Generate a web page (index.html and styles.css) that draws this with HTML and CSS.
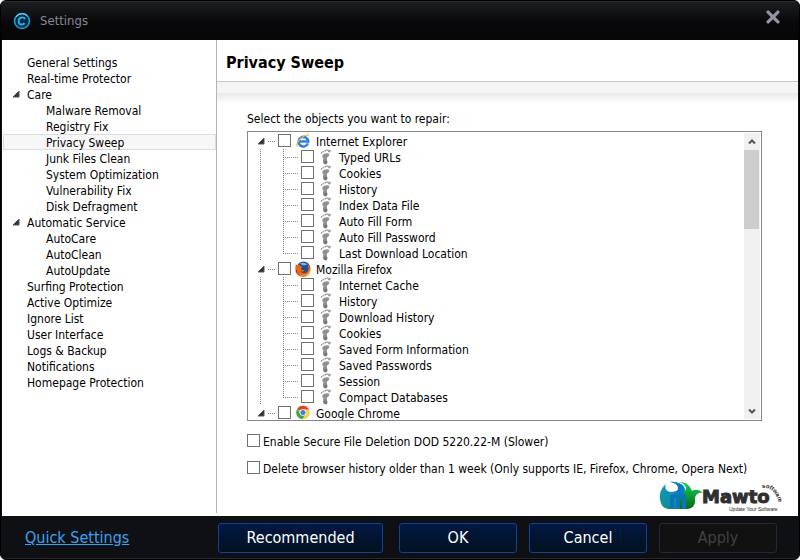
FILE: index.html
```html
<!DOCTYPE html>
<html lang="en">
<head>
<meta charset="utf-8">
<title>Settings</title>
<link rel="stylesheet" href="styles.css">
</head>
<body>
<svg class="defs" aria-hidden="true">
  <symbol id="foot" viewBox="0 0 12 16">
    <path d="M2.400 6.300C3.600 4.300 7.600 3.700 9 5c1 1.100-.3 2.300-1.400 3.100-1 .9-.8 2.200-.5 3.700.4 1.800.2 3.500-1.500 3.500-1.800 0-2.400-1.400-2.400-3.200 0-1.500.3-2.300-.3-3.300-.6-.9-.9-1.600-.5-2.500z" fill="#929292"/>
    <path d="M3.300 11.500c-.2 2.300.5 3.800 2.300 3.800s1.900-1.800 1.500-3.500z" fill="#787878"/>
    <g fill="#a2a2a2"><circle cx="1.600" cy="3.900" r=".9"/><circle cx="3.400" cy="2.600" r=".9"/><circle cx="5.300" cy="1.700" r=".9"/><circle cx="7.100" cy="1.200" r=".9"/><circle cx="9.300" cy="2" r="1.500"/></g>
  </symbol>
  <symbol id="twisty" viewBox="0 0 8 8"><path d="M7 1v6H1z" fill="#333" stroke="#555" stroke-width="1"/></symbol>
</svg>
<div class="window">
  <header class="titlebar">
    <svg class="app-icon" viewBox="0 0 18 18" aria-hidden="true">
      <circle cx="9" cy="9" r="7.500" fill="#042b42" stroke="#1b9fdc" stroke-width="1.600"/>
      <path d="M3 5a7.500 7.500 0 0 1 11-1.500" fill="none" stroke="#7fe0ff" stroke-width="1"/>
      <path d="M12 7.300C11.600 5.800 10.500 5.300 9.300 5.400 7 5.600 5.600 7.600 5.700 9.800c.1 1.900 1.500 2.900 3.200 2.700 1.200-.1 2-.6 2.600-1.400" fill="none" stroke="#22b4f0" stroke-width="1.900"/>
    </svg>
    <h1>Settings</h1>
    <button class="close" type="button" aria-label="Close"><svg viewBox="0 0 12 12"><path d="M1.800 1.800l8.400 8.400M10.200 1.800l-8.400 8.400" stroke="#9294a4" stroke-width="2.800" stroke-linecap="round"/></svg></button>
  </header>
  <div class="content">
    <nav class="sidebar">
      <ul>
        <li><a href="#">General Settings</a></li>
        <li><a href="#">Real-time Protector</a></li>
        <li class="group"><a href="#"><svg class="twisty"><use href="#twisty"/></svg>Care</a>
          <ul>
            <li><a href="#">Malware Removal</a></li>
            <li><a href="#">Registry Fix</a></li>
            <li><a href="#" class="current">Privacy Sweep</a></li>
            <li><a href="#">Junk Files Clean</a></li>
            <li><a href="#">System Optimization</a></li>
            <li><a href="#">Vulnerability Fix</a></li>
            <li><a href="#">Disk Defragment</a></li>
          </ul>
        </li>
        <li class="group"><a href="#"><svg class="twisty"><use href="#twisty"/></svg>Automatic Service</a>
          <ul>
            <li><a href="#">AutoCare</a></li>
            <li><a href="#">AutoClean</a></li>
            <li><a href="#">AutoUpdate</a></li>
          </ul>
        </li>
        <li><a href="#">Surfing Protection</a></li>
        <li><a href="#">Active Optimize</a></li>
        <li><a href="#">Ignore List</a></li>
        <li><a href="#">User Interface</a></li>
        <li><a href="#">Logs &amp; Backup</a></li>
        <li><a href="#">Notifications</a></li>
        <li><a href="#">Homepage Protection</a></li>
      </ul>
    </nav>
    <main>
      <h2>Privacy Sweep</h2>
      <div class="panel">
        <p class="prompt">Select the objects you want to repair:</p>
        <div class="listbox">
          <ul class="tree">
            <li>
              <label class="root"><svg class="twisty"><use href="#twisty"/></svg><span class="stub"></span><input type="checkbox"><svg class="brand" viewBox="0 0 16 16"><path d="M12.900 10.400A4.800 4.800 0 1 1 13.200 8.400H5" fill="none" stroke="#2f7de6" stroke-width="2.500"/><path d="M2.400 13.600C.8 12.200 3 7.200 7.500 4c3-2.100 6-2.900 6.300-1.300" fill="none" stroke="#e6bb45" stroke-width="1.200"/></svg>Internet Explorer</label>
              <ul>
                <li><label><input type="checkbox"><svg class="foot"><use href="#foot"/></svg>Typed URLs</label></li>
                <li><label><input type="checkbox"><svg class="foot"><use href="#foot"/></svg>Cookies</label></li>
                <li><label><input type="checkbox"><svg class="foot"><use href="#foot"/></svg>History</label></li>
                <li><label><input type="checkbox"><svg class="foot"><use href="#foot"/></svg>Index Data File</label></li>
                <li><label><input type="checkbox"><svg class="foot"><use href="#foot"/></svg>Auto Fill Form</label></li>
                <li><label><input type="checkbox"><svg class="foot"><use href="#foot"/></svg>Auto Fill Password</label></li>
                <li><label><input type="checkbox"><svg class="foot"><use href="#foot"/></svg>Last Download Location</label></li>
              </ul>
            </li>
            <li>
              <label class="root"><svg class="twisty"><use href="#twisty"/></svg><span class="stub"></span><input type="checkbox"><svg class="brand" viewBox="0 0 16 16"><circle cx="8.500" cy="7.300" r="6.800" fill="#234f8c"/><path d="M5 2.500c3-1.600 6-.8 7.400 1.200-1.500 0-2.200.7-3.600.6C7 4.200 6.300 3.700 5 2.500z" fill="#79b5e4"/><path d="M1 3.200C1.600 3.600 2 4 2.500 4.200 4 3.700 5 4.300 5.600 5.200l1.800.2c0 1-1.500 1.300-1.400 2.300.3 1.700 2.200 1.500 3.600 1.200-1.200 2-3.300 2.100-4.500 1.200 1.500 2.900 6.500 3 8-.5.800-2 .3-4.600-.9-6.300 2.300 1.500 3.500 3.600 3.300 6-.3 4.200-3.500 6.700-7.300 6.600C3.800 15.800.6 12.700.4 9 .3 6.700.3 5 1 3.200z" fill="#ea6a16"/><path d="M14 4c1.500 2 1.600 5-.1 7.300-2 2.700-5.600 3.600-8.500 2.500 4 2.800 9.900.4 10-5C15.500 7 15 5.400 14 4z" fill="#f6b73a"/><path d="M.7 9c.3 2.700 2 5 4.700 6C3 13.500 2 11.500 2 9z" fill="#b82e12"/></svg>Mozilla Firefox</label>
              <ul>
                <li><label><input type="checkbox"><svg class="foot"><use href="#foot"/></svg>Internet Cache</label></li>
                <li><label><input type="checkbox"><svg class="foot"><use href="#foot"/></svg>History</label></li>
                <li><label><input type="checkbox"><svg class="foot"><use href="#foot"/></svg>Download History</label></li>
                <li><label><input type="checkbox"><svg class="foot"><use href="#foot"/></svg>Cookies</label></li>
                <li><label><input type="checkbox"><svg class="foot"><use href="#foot"/></svg>Saved Form Information</label></li>
                <li><label><input type="checkbox"><svg class="foot"><use href="#foot"/></svg>Saved Passwords</label></li>
                <li><label><input type="checkbox"><svg class="foot"><use href="#foot"/></svg>Session</label></li>
                <li><label><input type="checkbox"><svg class="foot"><use href="#foot"/></svg>Compact Databases</label></li>
              </ul>
            </li>
            <li>
              <label class="root"><svg class="twisty"><use href="#twisty"/></svg><span class="stub"></span><input type="checkbox"><svg class="brand" viewBox="0 0 16 16"><circle cx="8" cy="7.500" r="6.700" fill="#fbd03c"/><path d="M8 7.500L2.200 4.100A6.700 6.700 0 0 1 13.900 4.500H8z" fill="#dc4334"/><path d="M2.200 4.100A6.700 6.700 0 0 0 7.300 14.200L10.300 9 5.400 9z" fill="#3ba650"/><circle cx="8" cy="7.500" r="3.300" fill="#fff"/><circle cx="8" cy="7.500" r="2.500" fill="#3d7fd8"/></svg>Google Chrome</label>
            </li>
          </ul>
          <div class="scrollbar" aria-hidden="true">
            <svg class="arrow" viewBox="0 0 16 16"><path d="M5 10l3-3 3 3" fill="none" stroke="#555" stroke-width="2"/></svg>
            <span class="thumb"></span>
            <svg class="arrow last" viewBox="0 0 16 16"><path d="M5 7l3 3 3-3" fill="none" stroke="#555" stroke-width="2"/></svg>
          </div>
        </div>
        <label class="option"><input type="checkbox">Enable Secure File Deletion DOD 5220.22-M (Slower)</label>
        <label class="option"><input type="checkbox">Delete browser history older than 1 week (Only supports IE, Firefox, Chrome, Opera Next)</label>
        <svg class="logo" viewBox="0 0 124 30" role="img" aria-label="Mawto Software">
          <defs>
            <linearGradient id="lg1" x1="0" y1="0" x2="0" y2="1"><stop offset="0" stop-color="#1595c8"/><stop offset="1" stop-color="#0d8f8c"/></linearGradient>
            <linearGradient id="lg2" x1="0" y1="0" x2="0" y2="1"><stop offset="0" stop-color="#12d354"/><stop offset="1" stop-color="#05661b"/></linearGradient>
            <path id="arc" d="M103 6Q117 4 121 26"/>
          </defs>
          <path d="M7 2C2 6-1 13 2 21c1 4 5 6 9 6h8V14c0-3-3-4-6-4C8 10 5 7 7 2z" fill="url(#lg1)"/>
          <path d="M20 0c8 0 11 4 13 9 3-2 7-2 11 2-5-1-8 2-8 6 1 6-3 10-8 10h-8V14c2-4 7-4 7-8-1-3-3-5-7-6z" fill="url(#lg2)"/>
          <path d="M11 0c8-1 15 3 15 8-1 4-7 4-8 8-1-4-3-6-7-6 5 0 8-1 8-4 0-3-3-5-8-6z" fill="#0879c5"/>
          <path d="M11 27V14c2-2 5-3 8-1 3-2 7-2 8 1v13h-4V16c-1-1-2-1-2 0v11h-4V16c-1-1-2-1-2 0v11z" fill="#0874bc"/>
          <text class="wordmark" x="43" y="21">Mawto</text>
          <text class="tagline" x="70" y="29">Update Your Software</text>
          <text class="arcword"><textPath href="#arc">software</textPath></text>
        </svg>
      </div>
    </main>
  </div>
  <footer>
    <a class="quick" href="#">Quick Settings</a>
    <button class="wide" type="button">Recommended</button>
    <button type="button">OK</button>
    <button type="button">Cancel</button>
    <button type="button" disabled>Apply</button>
  </footer>
</div>
</body>
</html>
```
FILE: styles.css
```css
* { box-sizing: border-box; }
body {
  margin: 0;
  background: #fff;
  color: #000;
  font: 12px/18px "DejaVu Sans Condensed", "DejaVu Sans", sans-serif;
}
ul { list-style: none; margin: 0; padding: 0; }
h1, h2, p { margin: 0; font-weight: normal; }
a { color: inherit; text-decoration: none; }
.defs { display: none; }

.window {
  display: flex;
  flex-direction: column;
  height: 100vh;
  min-height: 480px;
  border: 1px solid #000;
  border-radius: 6px;
  background: #0f1013;
  overflow: hidden;
}

.titlebar {
  display: flex;
  align-items: center;
  flex: none;
  height: 39px;
  padding: 0 19px 0 12px;
  border-top: 1px solid #2c2e34;
  background: linear-gradient(#1c1d20, #08080a 55%, #060606);
}
.app-icon { width: 18px; height: 18px; margin-right: 9px; }
h1 { color: #858a99; font-size: 13px; }
.close { margin: 0 0 8px auto; padding: 0; border: 0; background: none; }
.close svg { display: block; width: 14px; height: 14px; }

.content {
  display: flex;
  flex: 1;
  min-height: 0;
  margin: 0 1px;
  background: #fff;
}

.sidebar {
  flex: none;
  width: 215px;
  margin-bottom: 3px;
  padding: 14px 0 0 1px;
  border-right: 1px solid #b5b5b8;
}
.sidebar a {
  display: block;
  height: 16px;
  padding-left: 24px;
}
.sidebar li li a { padding-left: 43px; }
.sidebar .group > a { display: flex; padding-left: 9px; }
.sidebar .twisty { margin-right: 7px; }
.sidebar .current { background: #f7f7f7; box-shadow: inset 0 0 0 1px #dcdcdc; }
.twisty { flex: none; width: 8px; height: 8px; margin-top: 4px; }

main {
  display: flex;
  flex-direction: column;
  flex: 1;
  min-width: 0;
}
h2 {
  height: 42px;
  padding-left: 9px;
  border-bottom: 1px solid #c8c8c8;
  font-size: 16px;
  font-weight: bold;
  line-height: 45px;
}
.panel {
  display: flex;
  flex-direction: column;
  flex: 1;
  min-height: 0;
  padding: 28px 36px 4px 30px;
  background: linear-gradient(#f5f5f5 11px, #e9e9e9 11px, #fff 22px);
}
.prompt { margin-bottom: 3px; }

.listbox {
  display: flex;
  flex: 1;
  min-height: 0;
  margin-bottom: 12px;
  padding: 1px;
  border: 1px solid #828790;
  overflow: hidden;
}
.tree { flex: 1; min-width: 0; }
.tree label { display: flex; align-items: flex-start; height: 16px; }
.tree .root { padding-left: 8px; }
.tree .root .twisty { margin-right: 3px; }
.stub {
  width: 7px;
  height: 1px;
  margin: 8px 3px 0 0;
  background: repeating-linear-gradient(90deg, #808080 0 1px, transparent 1px 2px);
}
.tree li ul {
  padding-left: 34px;
  background: repeating-linear-gradient(#808080 0 1px, transparent 1px 2px) 11px 0 / 1px 100% no-repeat;
}
.tree li li {
  padding-left: 18px;
  background:
    repeating-linear-gradient(#808080 0 1px, transparent 1px 2px) 0 0 / 1px 100% no-repeat,
    repeating-linear-gradient(90deg, #808080 0 1px, transparent 1px 2px) 0 8px / 15px 1px no-repeat;
}
.tree li li:last-child { background-size: 1px 8px, 15px 1px; }
.brand { width: 16px; height: 16px; margin: 0 5px 0 4px; }
.foot { width: 12px; height: 16px; margin: 0 7px 0 6px; }

input {
  appearance: none;
  flex: none;
  width: 13px;
  height: 13px;
  margin: 1px 0 0;
  border: 1px solid #707070;
  background: #fff;
}
input:checked { background: #555; box-shadow: inset 0 0 0 2px #fff; }

.scrollbar {
  display: flex;
  flex-direction: column;
  flex: none;
  width: 16px;
  background: #f0f0f0;
}
.arrow { width: 16px; height: 17px; }
.arrow.last { margin-top: auto; }
.thumb { width: 15px; height: 79px; background: #cdcdcd; }

.option {
  display: flex;
  align-items: flex-start;
  flex: none;
  gap: 3px;
  height: 16px;
  margin-bottom: 11px;
  white-space: nowrap;
}
.logo {
  flex: none;
  align-self: flex-end;
  width: 124px;
  height: 30px;
  margin: -5px -21px 0 0;
  overflow: visible;
}
.wordmark { font: 900 18px "DejaVu Sans", sans-serif; fill: #2f2f31; stroke: #2f2f31; stroke-width: 1px; }
.tagline { font: 5px "Liberation Sans", sans-serif; fill: #222; }
.arcword { font: bold 6px "Liberation Sans", sans-serif; fill: #222; }

footer {
  display: flex;
  align-items: center;
  flex: none;
  gap: 12px;
  height: 43px;
  padding: 2px 22px 0 24px;
  border-bottom: 1px solid #25272b;
  font-size: 16px;
}
.quick { margin-right: auto; color: #39a3f4; text-decoration: underline; }
footer button {
  width: 118px;
  height: 30px;
  padding: 0;
  border: 1px solid #0c419c;
  border-radius: 3px;
  background: linear-gradient(#031744, #01121f);
  color: #fff;
  font: inherit;
}
footer .wide { width: 165px; margin-right: 4px; }
footer button:disabled { border-color: #26292d; background: #111; color: #424242; }
```
